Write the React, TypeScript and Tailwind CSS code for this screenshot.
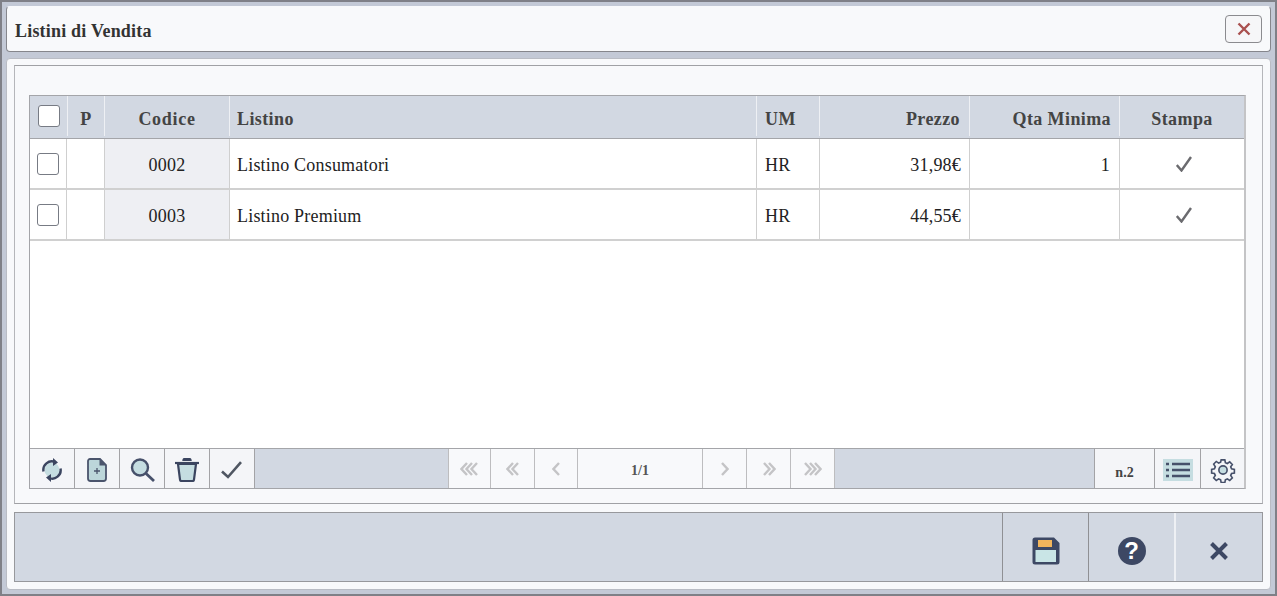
const colW = ["w-[37px]", "w-[38px]", "w-[125px]", "w-[527px]", "w-[63px]", "w-[150px]", "w-[150px]"];

const rows = [
  { codice: "0002", listino: "Listino Consumatori", um: "HR", prezzo: "31,98€", qta: "1" },
  { codice: "0003", listino: "Listino Premium", um: "HR", prezzo: "44,55€", qta: "" },
];

function Checkbox() {
  return <span className="block h-[22px] w-[22px] rounded-[3px] border border-[#777b84] bg-white" />;
}

function HeaderCell({ className, children }: { className: string; children?: React.ReactNode }) {
  return (
    <div className={`flex h-[40px] shrink-0 items-center border-r border-r-[#eef0f4] text-[18px] font-bold tracking-[0.4px] text-[#444] ${className}`}>
      {children}
    </div>
  );
}

function Cell({ className, children }: { className: string; children?: React.ReactNode }) {
  return (
    <div className={`flex h-full shrink-0 items-center border-r border-r-[#cfcfcf] text-[18px] tracking-[0.2px] text-[#222] ${className}`}>
      {children}
    </div>
  );
}

function Chevrons({ count, dir }: { count: number; dir: "left" | "right" }) {
  const xs = Array.from({ length: count }, (_, i) => i * 5);
  const width = 9 + (count - 1) * 5;
  return (
    <svg width={width} height="14" viewBox={`0 0 ${width} 14`} fill="none">
      {xs.map((x) => (
        <path
          key={x}
          d={dir === "left" ? `M${x + 7} 1 L${x + 1.5} 7 L${x + 7} 13` : `M${x + 2} 1 L${x + 7.5} 7 L${x + 2} 13`}
          stroke="#c4c4c6"
          strokeWidth="2.4"
        />
      ))}
    </svg>
  );
}

function ToolBtn({ className, children }: { className: string; children?: React.ReactNode }) {
  return (
    <div className={`flex h-full shrink-0 items-center justify-center border-r border-r-[#a3a3a6] bg-[#f4f5f8] pt-[3px] ${className}`}>
      {children}
    </div>
  );
}

function PageBtn({ className, children }: { className: string; children?: React.ReactNode }) {
  return (
    <div className={`flex h-full shrink-0 items-center justify-center border-r border-r-[#bdbdbf] bg-[#f8f9fb] ${className}`}>
      {children}
    </div>
  );
}

export default function App() {
  return (
    <div className="flex h-[596px] w-[1277px] flex-col gap-[6px] overflow-hidden border-2 border-[#7f8087] bg-[#c3c9d6] p-1 font-['Liberation_Serif',serif]">
      {/* titolo */}
      <div className="flex h-[46px] shrink-0 items-center justify-between rounded-[4px] border border-[#85868c] border-t-[#f8f9fb] bg-[#f8f9fb] pr-[8px] pl-[8px]">
        <span className="pt-[5px] text-[18px] font-bold tracking-[0.2px] text-[#333]">Listini di Vendita</span>
        <div className="flex h-[28px] w-[37px] items-center justify-center rounded-[4px] border border-[#8b8b8f] bg-[#f6f6f8]">
          <svg width="14" height="14" viewBox="0 0 14 14" fill="none">
            <path d="M1.5 1.5 L12.5 12.5 M12.5 1.5 L1.5 12.5" stroke="#a9504f" strokeWidth="2.4" />
          </svg>
        </div>
      </div>

      {/* corpo */}
      <div className="flex min-h-0 flex-1 flex-col rounded-[4px] border border-[#b9bcc4] bg-[#f8f9fb] px-[7px] pt-[6px] pb-[7px]">
        <div className="flex h-[439px] shrink-0 flex-col border border-[#b5b6ba] border-t-[#a0a1a5] border-b-[#a0a1a5] bg-[#f8f9fb] pt-[29px] pr-[16px] pb-[14px] pl-[14px]">
          <div className="flex h-[394px] flex-col border border-r-2 border-[#a4a5a9] border-r-[#c4c4c6] bg-white">
            <div className="flex h-[43px] shrink-0 items-start border-b border-b-[#a4a5a9] bg-[#d2d8e2]">
              <HeaderCell className="w-[38px] justify-center"><Checkbox /></HeaderCell>
              <HeaderCell className="w-[37px] justify-center pt-[7px]">P</HeaderCell>
              <HeaderCell className={`${colW[2]} justify-center pt-[7px] tracking-[0.7px]`}>Codice</HeaderCell>
              <HeaderCell className={`${colW[3]} pt-[7px] pl-[7px]`}>Listino</HeaderCell>
              <HeaderCell className={`${colW[4]} pt-[7px] pl-[8px]`}>UM</HeaderCell>
              <HeaderCell className={`${colW[5]} justify-end pt-[7px] pr-[9px]`}>Prezzo</HeaderCell>
              <HeaderCell className={`${colW[6]} justify-end pt-[7px] pr-[8px]`}>Qta Minima</HeaderCell>
              <HeaderCell className="min-w-0 flex-1 justify-center border-r-0 pt-[7px]">Stampa</HeaderCell>
            </div>
            {rows.map((r) => (
              <div key={r.codice} className="flex h-[51px] shrink-0 border-b-2 border-b-[#d0d0d0]">
                <Cell className={`${colW[0]} justify-center`}><Checkbox /></Cell>
                <Cell className={colW[1]} />
                <Cell className={`${colW[2]} justify-center bg-[#eeeff3] pt-[3px]`}>{r.codice}</Cell>
                <Cell className={`${colW[3]} pt-[3px] pl-[7px]`}>{r.listino}</Cell>
                <Cell className={`${colW[4]} pt-[3px] pl-[8px]`}>{r.um}</Cell>
                <Cell className={`${colW[5]} justify-end pt-[3px] pr-[8px]`}>{r.prezzo}</Cell>
                <Cell className={`${colW[6]} justify-end pt-[3px] pr-[9px]`}>{r.qta}</Cell>
                <Cell className="min-w-0 flex-1 justify-center border-r-0 pl-[3px]">
                  <svg width="16" height="16" viewBox="0 0 16 16" fill="none">
                    <path d="M0.8 9 L5.5 14.5 L15 1" stroke="#6b6b6f" strokeWidth="2.4" />
                  </svg>
                </Cell>
              </div>
            ))}
            <div className="min-h-0 flex-1 bg-white" />

            {/* barra strumenti */}
            <div className="flex h-[40px] shrink-0 border-t border-t-[#a4a5a9] bg-[#d2d8e2]">
              <ToolBtn className="w-[45px]">
                <svg width="20" height="24" viewBox="0 0 20 24" fill="none">
                  <circle cx="10" cy="12" r="7.5" fill="#c5dde1" />
                  <path d="M1.5 13.5 A8.5 8.5 0 0 1 13 4" stroke="#3b4560" strokeWidth="2.4" />
                  <path d="M18.5 10.5 A8.5 8.5 0 0 1 7 20" stroke="#3b4560" strokeWidth="2.4" />
                  <path d="M11 0 L16 4.5 L11 8 Z M9 24 L4 19.5 L9 16 Z" fill="#3b4560" />
                </svg>
              </ToolBtn>
              <ToolBtn className="w-[45px]">
                <svg width="20" height="24" viewBox="0 0 20 24" fill="none">
                  <path d="M3 1 H13 L19 7 V20.5 A2.5 2.5 0 0 1 16.5 23 H3.5 A2.5 2.5 0 0 1 1 20.5 V3 A2 2 0 0 1 3 1 Z" fill="#bcd6da" stroke="#4a546c" strokeWidth="1.8" />
                  <path d="M12.5 1 V7.5 H19 Z" fill="#4a546c" />
                  <path d="M7 13 H13 M10 10 V16" stroke="#4a546c" strokeWidth="1.3" />
                </svg>
              </ToolBtn>
              <ToolBtn className="w-[45px]">
                <svg width="25" height="24" viewBox="0 0 25 24" fill="none">
                  <circle cx="10" cy="9.5" r="8" fill="#c5dde1" stroke="#46506a" strokeWidth="2.4" />
                  <path d="M16 15.5 L24 23" stroke="#46506a" strokeWidth="2.8" />
                </svg>
              </ToolBtn>
              <ToolBtn className="w-[45px]">
                <svg width="24" height="24" viewBox="0 0 24 24" fill="none">
                  <path d="M3 6 H21 L19 21.5 A1.5 1.5 0 0 1 17.5 23 H6.5 A1.5 1.5 0 0 1 5 21.5 Z" fill="#c5dde1" stroke="#3b4560" strokeWidth="2.2" />
                  <path d="M0 5 H24" stroke="#3b4560" strokeWidth="2.2" />
                  <path d="M8 3 Q8 0.5 10 0.5 H14 Q16 0.5 16 3" stroke="#3b4560" strokeWidth="1.5" fill="#3b4560" />
                </svg>
              </ToolBtn>
              <ToolBtn className="w-[45px]">
                <svg className="-ml-[2px]" width="21" height="18" viewBox="0 0 21 18" fill="none">
                  <path d="M1 10.5 L7 16 L20 1.2" stroke="#4f5662" strokeWidth="2.6" />
                </svg>
              </ToolBtn>
              <div className="w-[193px] shrink-0" />
              <PageBtn className="w-[43px] border-l border-l-[#bdbdbf]"><Chevrons count={3} dir="left" /></PageBtn>
              <PageBtn className="w-[44px]"><Chevrons count={2} dir="left" /></PageBtn>
              <PageBtn className="w-[43px]"><Chevrons count={1} dir="left" /></PageBtn>
              <PageBtn className="w-[125px] pt-[3px] text-[14px] font-bold text-[#555]">1/1</PageBtn>
              <PageBtn className="w-[44px]"><Chevrons count={1} dir="right" /></PageBtn>
              <PageBtn className="w-[44px]"><Chevrons count={2} dir="right" /></PageBtn>
              <PageBtn className="w-[44px] border-r-[#a3a3a6]"><Chevrons count={3} dir="right" /></PageBtn>
              <div className="min-w-0 flex-1" />
              <ToolBtn className="w-[61px] border-l border-l-[#a3a3a6] text-[14px] font-bold text-[#444]">
                <span className="pt-[4px]">n.2</span>
              </ToolBtn>
              <ToolBtn className="w-[46px]">
                <svg width="30" height="22" viewBox="0 0 30 22" fill="none">
                  <rect width="30" height="22" fill="#c5dde1" />
                  <path d="M9 5 H27 M9 11 H27 M9 17 H27" stroke="#46506a" strokeWidth="2.4" />
                  <path d="M3 5 H6 M3 11 H6 M3 17 H6" stroke="#46506a" strokeWidth="2.6" />
                </svg>
              </ToolBtn>
              <ToolBtn className="w-[43px] border-r-0">
                <svg width="26" height="26" viewBox="0 0 24 24" fill="none" stroke="#46506a" strokeWidth="1.5">
                  <path d="M10.3 2.6h3.4l.5 2.6 1.8.8 2.2-1.5 2.4 2.4-1.5 2.2.8 1.8 2.6.5v3.4l-2.6.5-.8 1.8 1.5 2.2-2.4 2.4-2.2-1.5-1.8.8-.5 2.6h-3.4l-.5-2.6-1.8-.8-2.2 1.5-2.4-2.4 1.5-2.2-.8-1.8-2.6-.5v-3.4l2.6-.5.8-1.8L3.4 6.5l2.4-2.4L8 5.6l1.8-.8z" />
                  <circle cx="12" cy="12" r="3.8" fill="#c5dde1" />
                </svg>
              </ToolBtn>
            </div>
          </div>
        </div>

        {/* pulsanti */}
        <div className="mt-[8px] flex h-[70px] shrink-0 border border-[#97989c] bg-[#d2d8e2]">
          <div className="min-w-0 flex-1" />
          <div className="flex w-[86px] shrink-0 items-center justify-center border-l border-l-[#8f9094] pt-[8px]">
            <svg width="28" height="28" viewBox="0 0 28 28" fill="none">
              <path d="M3 0.5 H22 L27.5 6 V25 A2.5 2.5 0 0 1 25 27.5 H3 A2.5 2.5 0 0 1 0.5 25 V3 A2.5 2.5 0 0 1 3 0.5 Z" fill="#3d4864" />
              <rect x="6" y="3" width="14" height="7" fill="#f2b55c" />
              <rect x="3.5" y="13" width="20.5" height="12" fill="#c9e5e6" />
            </svg>
          </div>
          <div className="flex w-[86px] shrink-0 items-center justify-center border-l border-l-[#8f9094] pt-[8px]">
            <div className="flex h-[28px] w-[28px] items-center justify-center rounded-full bg-[#3d4864] font-['Liberation_Sans',sans-serif] text-[24px] leading-none font-bold text-white">?</div>
          </div>
          <div className="flex w-[88px] shrink-0 items-center justify-center border-l-2 border-l-[#eef0f4] pt-[8px]">
            <svg width="20" height="20" viewBox="0 0 20 20" fill="none">
              <path d="M2.5 2.5 L17.5 17.5 M17.5 2.5 L2.5 17.5" stroke="#3d4864" strokeWidth="4" />
            </svg>
          </div>
        </div>
      </div>
    </div>
  );
}
